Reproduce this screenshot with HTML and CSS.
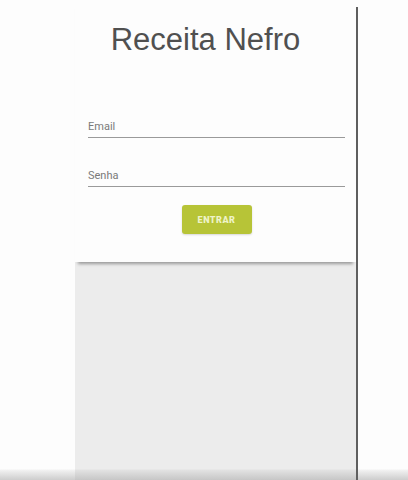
FILE: index.html
```html
<!DOCTYPE html>
<html>
<head>
<meta charset="utf-8">
<link rel="stylesheet" href="styles.css">
</head>
<body>
<div class="screen">
  <div class="gutter"></div>
  <div class="app">
    <div class="card">
      <h1 class="title">Receita Nefro</h1>
      <div class="field"><span class="label">Email</span></div>
      <div class="field field-2"><span class="label">Senha</span></div>
      <div class="actions"><button class="btn">ENTRAR</button></div>
    </div>
    <div class="backdrop"></div>
  </div>
  <div class="divider"></div>
  <div class="rest"></div>
</div>
</body>
</html>
```
FILE: styles.css
```css
html, body {
  margin: 0;
  padding: 0;
  background: #fdfdfd;
  font-family: "Liberation Sans", Arial, sans-serif;
}
.screen {
  width: 408px;
  height: 480px;
  display: flex;
  overflow: hidden;
  background: linear-gradient(to bottom, #fdfdfd 469px, #f2f2f2 470px, #cdcdcd 480px);
}
.gutter {
  width: 75px;
}
.app {
  width: 281px;
  display: flex;
  flex-direction: column;
}
.card {
  height: 262px;
  background: #fdfdfd;
  box-shadow: 0 5px 3px -3px rgba(0,0,0,0.35);
  position: relative;
  z-index: 1;
  box-sizing: border-box;
  padding-top: 19px;
}
.title {
  margin: 0 0 0 -20px;
  text-align: center;
  font-weight: normal;
  font-size: 31px;
  line-height: 42px;
  color: #505050;
}
.field {
  margin: 57px 11px 0 13px;
  border-bottom: 1px solid #9a9a9a;
  height: 19px;
  display: flex;
  align-items: flex-end;
}
.field-2 {
  margin-top: 29px;
}
.label {
  font-family: Roboto, "Liberation Sans", sans-serif;
  font-size: 11px;
  color: #7a7a7a;
  line-height: 16px;
  padding-bottom: 2px;
}
.actions {
  display: flex;
  justify-content: center;
  margin-top: 18px;
  padding-left: 2px;
}
.btn {
  width: 70px;
  height: 29px;
  border: none;
  border-radius: 3px;
  background: #b7c437;
  color: #eef3c8;
  font-family: Roboto, "Liberation Sans", sans-serif;
  font-weight: 900;
  font-size: 9px;
  letter-spacing: 0.5px;
  padding: 0;
  box-shadow: 0 1px 2px rgba(0,0,0,0.15);
}
.backdrop {
  flex: 1;
  background: linear-gradient(to bottom, #ececec calc(100% - 11px), #e2e2e2 calc(100% - 10px), #c6c6c6 100%);
}
.divider {
  width: 2px;
  margin-top: 7px;
  background: #5f5f5f;
}
.rest {
  flex: 1;
}
```
